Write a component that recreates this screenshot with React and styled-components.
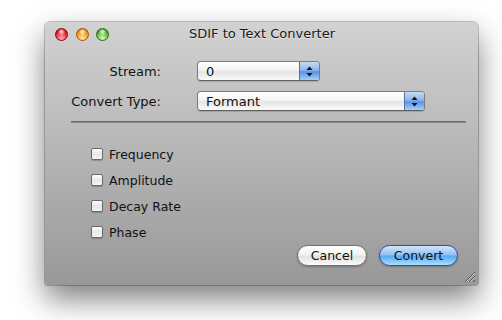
import React from "react";
import styled, { createGlobalStyle } from "styled-components";

const GlobalStyle = createGlobalStyle`
  html, body {
    margin: 0;
    padding: 0;
    background: #ffffff;
  }
  body {
    font-family: "DejaVu Sans", "Liberation Sans", sans-serif;
    font-size: 13px;
    color: #111;
  }
`;

const Page = styled.div`
  width: 502px;
  height: 320px;
  padding: 22px 0 0 45px;
  box-sizing: border-box;
`;

const Window = styled.div`
  width: 433px;
  height: 263px;
  border-radius: 5px 5px 2px 2px;
  background: linear-gradient(#d2d2d2, #989898);
  box-shadow: 0 0 0 1px rgba(0, 0, 0, 0.22), 0 14px 30px rgba(0, 0, 0, 0.5);
  display: flex;
  flex-direction: column;
  position: relative;
`;

const TitleBar = styled.div`
  height: 22px;
  display: flex;
  align-items: center;
  padding: 0 9px 0 10px;
`;

const Lights = styled.div`
  display: flex;
  gap: 7.5px;
  padding-top: 2px;
`;

const lightColors = {
  red: ["#ffb0b0", "#e8202c", "#8a0010"],
  yellow: ["#ffe7a8", "#f29a12", "#a55400"],
  green: ["#d8ffb8", "#55b832", "#236b10"],
};

const Light = styled.span`
  width: 13px;
  height: 13px;
  border-radius: 50%;
  box-sizing: border-box;
  border: 1px solid ${(p) => lightColors[p.$c][2]};
  background: radial-gradient(
      circle at 50% 25%,
      rgba(255, 255, 255, 0.9) 0,
      rgba(255, 255, 255, 0) 38%
    ),
    radial-gradient(circle at 50% 85%, ${(p) => lightColors[p.$c][0]} 0, ${(p) => lightColors[p.$c][1]} 60%, ${(p) => lightColors[p.$c][2]} 100%);
`;

const Title = styled.div`
  flex: 1;
  text-align: center;
  font-size: 13px;
  color: #1a1a1a;
  text-shadow: 0 1px 0 rgba(255, 255, 255, 0.5);
  margin-right: 54px;
  padding-top: 1px;
`;

const Form = styled.div`
  display: grid;
  grid-template-columns: 90px auto;
  column-gap: 36px;
  row-gap: 10px;
  padding: 17px 0 0 26px;
  align-items: center;
`;

const Label = styled.label`
  text-align: right;
  color: #111;
  white-space: nowrap;
`;

const Popup = styled.div`
  width: ${(p) => p.$w}px;
  height: 20px;
  box-sizing: border-box;
  border: 1px solid #7d7d7d;
  border-bottom-color: #5f5f5f;
  border-radius: 4px;
  background: linear-gradient(#ffffff 0%, #f4f4f4 45%, #e4e4e4 55%, #fafafa 100%);
  display: flex;
  align-items: center;
  overflow: hidden;
  box-shadow: 0 1px 1px rgba(0, 0, 0, 0.15);
`;

const PopupText = styled.span`
  flex: 1;
  padding-left: 8px;
`;

const Stepper = styled.span`
  width: 19px;
  height: 100%;
  border-left: 1px solid #5a6fa8;
  background: linear-gradient(#c6dbf5 0%, #8fb4ea 45%, #5b92e4 55%, #a3d1fb 100%);
  display: flex;
  align-items: center;
  justify-content: center;
`;

const Separator = styled.div`
  margin: 10px 12px 0 26px;
  height: 1px;
  background: #6f6f6f;
  border-bottom: 1px solid rgba(255, 255, 255, 0.18);
`;

const Bottom = styled.div`
  flex: 1;
  display: flex;
  justify-content: space-between;
  padding: 24px 20px 19px 46px;
`;

const Checks = styled.div`
  display: flex;
  flex-direction: column;
  gap: 12px;
  font-size: 12.5px;
`;

const CheckRow = styled.label`
  display: flex;
  align-items: center;
  gap: 6px;
  height: 14px;
`;

const Box = styled.span`
  width: 12px;
  height: 12px;
  box-sizing: border-box;
  border: 1px solid #6a6a6a;
  border-radius: 2px;
  background: linear-gradient(#ffffff, #e6e6e6 50%, #f6f6f6);
  box-shadow: 0 1px 1px rgba(0, 0, 0, 0.2);
`;

const Buttons = styled.div`
  display: flex;
  gap: 12px;
  align-self: flex-end;
`;

const Button = styled.button`
  font-family: inherit;
  font-size: 12.5px;
  color: #111;
  width: ${(p) => p.$w}px;
  height: 21px;
  border-radius: 11px;
  box-sizing: border-box;
  padding: 0;
  border: 1px solid ${(p) => (p.$primary ? "#3a4d8f" : "#707070")};
  background: ${(p) =>
    p.$primary
      ? "linear-gradient(#d3e6fb 0%, #8ec0f5 48%, #58a7f2 52%, #a8e0ff 100%)"
      : "linear-gradient(#ffffff 0%, #f2f2f2 48%, #e0e0e0 52%, #fbfbfb 100%)"};
  box-shadow: 0 1px 2px rgba(0, 0, 0, 0.25);
`;

const Grip = styled.svg`
  position: absolute;
  right: 2px;
  bottom: 2px;
`;

function Arrows() {
  return (
    <svg width="7" height="11" viewBox="0 0 7 11">
      <path d="M3.5 0.5 L6.5 4 L0.5 4 Z" fill="#111" />
      <path d="M3.5 10.5 L6.5 7 L0.5 7 Z" fill="#111" />
    </svg>
  );
}

const options = ["Frequency", "Amplitude", "Decay Rate", "Phase"];

export default function App() {
  return (
    <>
      <GlobalStyle />
      <Page>
        <Window>
          <TitleBar>
            <Lights>
              <Light $c="red" />
              <Light $c="yellow" />
              <Light $c="green" />
            </Lights>
            <Title>SDIF to Text Converter</Title>
          </TitleBar>
          <Form>
            <Label>Stream:</Label>
            <Popup $w={123}>
              <PopupText>0</PopupText>
              <Stepper>
                <Arrows />
              </Stepper>
            </Popup>
            <Label>Convert Type:</Label>
            <Popup $w={228}>
              <PopupText>Formant</PopupText>
              <Stepper>
                <Arrows />
              </Stepper>
            </Popup>
          </Form>
          <Separator />
          <Bottom>
            <Checks>
              {options.map((o) => (
                <CheckRow key={o}>
                  <Box />
                  {o}
                </CheckRow>
              ))}
            </Checks>
            <Buttons>
              <Button $w={70}>Cancel</Button>
              <Button $w={79} $primary>
                Convert
              </Button>
            </Buttons>
          </Bottom>
          <Grip width="13" height="13" viewBox="0 0 13 13">
            <path d="M2 12 L12 2 M6 12 L12 6 M10 12 L12 10" stroke="#555" strokeWidth="1" />
            <path d="M3 12 L12 3 M7 12 L12 7" stroke="#c8c8c8" strokeWidth="1" />
          </Grip>
        </Window>
      </Page>
    </>
  );
}
